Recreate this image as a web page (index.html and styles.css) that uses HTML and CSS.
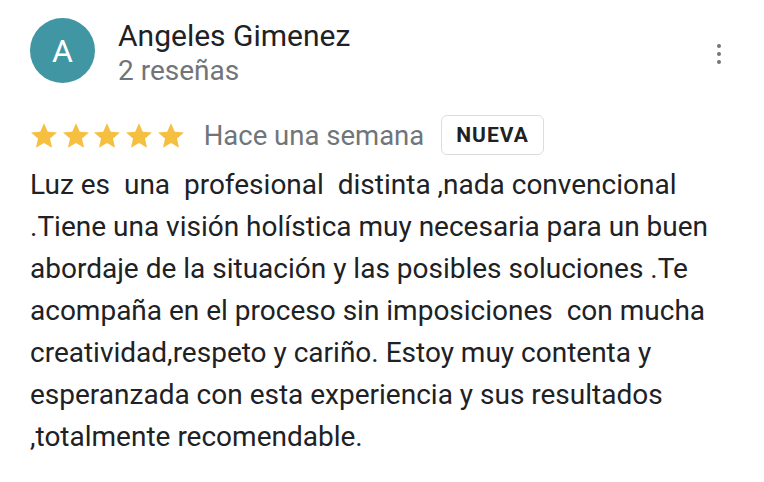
FILE: index.html
```html
<!DOCTYPE html>
<html lang="es">
<head>
    <meta charset="UTF-8">
    <meta name="viewport" content="width=device-width, initial-scale=1.0">
    <title>Reseña</title>
    <link rel="stylesheet" href="styles.css">
</head>
<body>
    <article class="review">
        <header class="review__head">
            <div class="avatar">A</div>
            <div class="author">
                <div class="author__name">Angeles Gimenez</div>
                <div class="author__count">2 reseñas</div>
            </div>
            <button class="more" aria-label="Más opciones">
                <span></span><span></span><span></span>
            </button>
        </header>

        <div class="review__meta">
            <div class="stars">
                <svg viewBox="2 2.5 20 19"><path d="M12 2.5l2.9 6.6 7.1.6-5.4 4.7 1.6 7-6.2-3.7-6.2 3.7 1.6-7L2 9.7l7.1-.6z"/></svg>
                <svg viewBox="2 2.5 20 19"><path d="M12 2.5l2.9 6.6 7.1.6-5.4 4.7 1.6 7-6.2-3.7-6.2 3.7 1.6-7L2 9.7l7.1-.6z"/></svg>
                <svg viewBox="2 2.5 20 19"><path d="M12 2.5l2.9 6.6 7.1.6-5.4 4.7 1.6 7-6.2-3.7-6.2 3.7 1.6-7L2 9.7l7.1-.6z"/></svg>
                <svg viewBox="2 2.5 20 19"><path d="M12 2.5l2.9 6.6 7.1.6-5.4 4.7 1.6 7-6.2-3.7-6.2 3.7 1.6-7L2 9.7l7.1-.6z"/></svg>
                <svg viewBox="2 2.5 20 19"><path d="M12 2.5l2.9 6.6 7.1.6-5.4 4.7 1.6 7-6.2-3.7-6.2 3.7 1.6-7L2 9.7l7.1-.6z"/></svg>
            </div>
            <span class="date">Hace una semana</span>
            <span class="badge">NUEVA</span>
        </div>

        <p class="review__text">Luz es&nbsp; una&nbsp; profesional&nbsp; distinta ,nada convencional<br>.Tiene una visión holística muy necesaria para un buen<br>abordaje de la situación y las posibles soluciones .Te<br>acompaña en el proceso sin imposiciones&nbsp; con mucha<br>creatividad,respeto y cariño. Estoy muy contenta y<br>esperanzada con esta experiencia y sus resultados<br>,totalmente recomendable.</p>
    </article>
</body>
</html>
```

FILE: styles.css
```css
*,
*:before,
*:after{
    box-sizing: border-box;
}

body{
    margin: 0;
    background: #fff;
    font-family: Roboto, "Noto Sans", sans-serif;
    color: #202124;
}

.review{
    padding: 18px 30px 0 30px;
}

.review__head{
    display: flex;
    align-items: flex-start;
}

.avatar{
    width: 65px;
    height: 65px;
    border-radius: 50%;
    background: #4097a3;
    color: #fff;
    font-size: 32px;
    display: flex;
    align-items: center;
    justify-content: center;
    flex-shrink: 0;
}

.author{
    margin-left: 23px;
    flex: 1;
}

.author__name{
    font-size: 30px;
    line-height: 36px;
}

.author__count{
    font-size: 28px;
    line-height: 34px;
    color: #70757a;
}

.more{
    background: none;
    border: none;
    padding: 0;
    margin: 26px 13px 0 0;
    display: flex;
    flex-direction: column;
    gap: 4px;
    cursor: pointer;
}

.more span{
    width: 4px;
    height: 4px;
    border-radius: 50%;
    background: #70757a;
}

.review__meta{
    display: flex;
    align-items: center;
    margin-top: 27px;
    height: 40px;
}

.stars{
    display: flex;
    gap: 5.7px;
    margin-left: 1px;
}

.stars svg{
    width: 26px;
    height: 25px;
    fill: #f6bf3f;
}

.date{
    margin-left: 20px;
    font-size: 27.5px;
    color: #70757a;
}

.badge{
    margin-left: 17px;
    height: 40px;
    padding: 0 14px;
    border: 1.5px solid #dadce0;
    border-radius: 6px;
    font-size: 21px;
    font-weight: 700;
    letter-spacing: 1px;
    display: flex;
    align-items: center;
}

.review__text{
    margin: 9px 0 0;
    font-size: 28px;
    line-height: 42px;
}
```
